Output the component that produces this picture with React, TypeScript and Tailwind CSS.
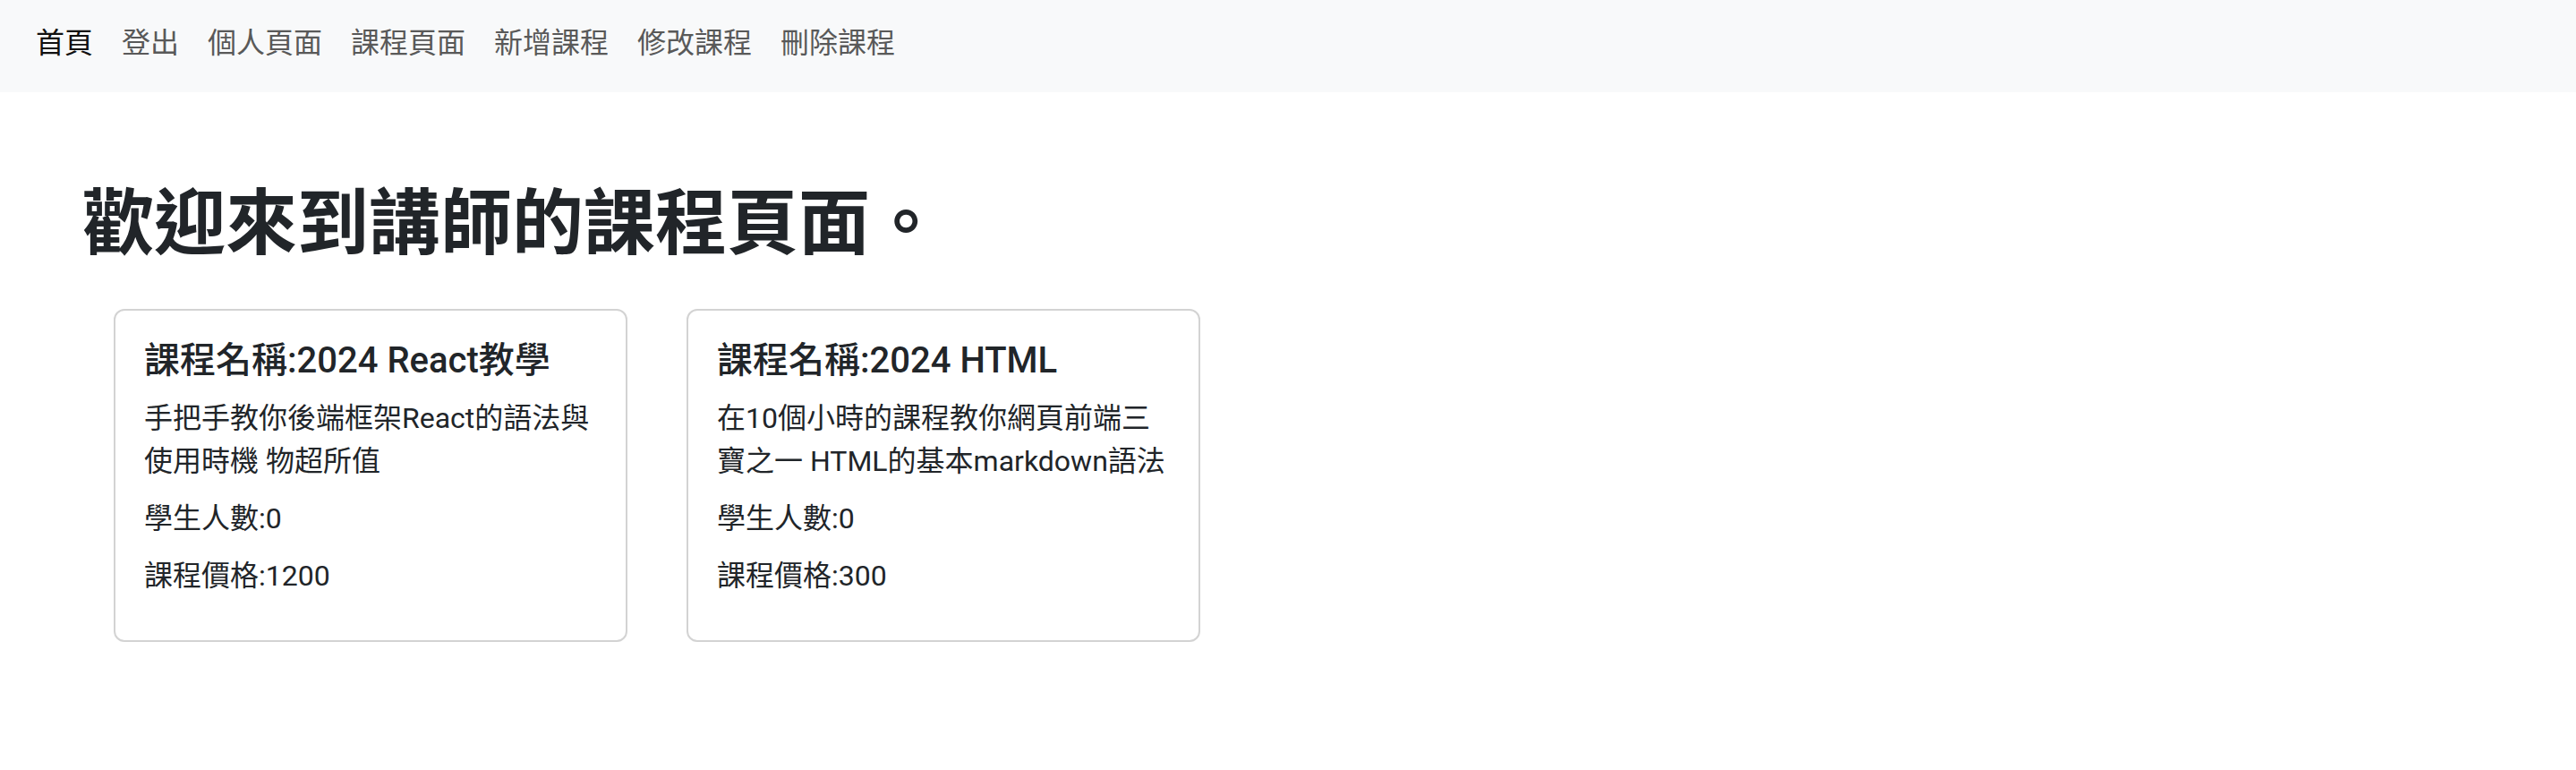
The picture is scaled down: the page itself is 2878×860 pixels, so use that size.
import React from 'react';

const navLinks = ['首頁', '登出', '個人頁面', '課程頁面', '新增課程', '修改課程', '刪除課程'];

const courses = [
  { title: '2024 React教學', description: '手把手教你後端框架React的語法與使用時機 物超所值', students: 0, price: 1200 },
  { title: '2024 HTML', description: '在10個小時的課程教你網頁前端三寶之一 HTML的基本markdown語法', students: 0, price: 300 },
];

const App: React.FC = () => {
  return (
    <div className="min-h-screen bg-white text-[#212529] font-['Roboto','Noto_Sans_CJK_TC',sans-serif]">
      <nav className="bg-[#f8f9fa] h-[103px] pt-[24px] px-[24px]">
        <ul className="flex">
          {navLinks.map((name, i) => (
            <li key={name}>
              <a
                href="#"
                className={`block px-[16px] text-[32px] leading-[48px] ${i === 0 ? 'text-[#111111]' : 'text-[#595959]'}`}
              >
                {name}
              </a>
            </li>
          ))}
        </ul>
      </nav>

      <main className="pt-[99px] pl-[92px]">
        <h1 className="text-[80px] leading-[96px] font-semibold mb-[47px]">歡迎來到講師的課程頁面。</h1>

        <div className="flex items-start gap-[66px] ml-[35px]">
          {courses.map(course => (
            <div key={course.title} className="w-[574px] border-2 border-[#d3d3d3] rounded-[12px] p-[32px]">
              <h5 className="text-[40px] leading-[48px] font-medium mb-[16px]">課程名稱:{course.title}</h5>
              <p className="text-[32px] leading-[48px] mb-[16px]">{course.description}</p>
              <p className="text-[32px] leading-[48px] mb-[16px]">學生人數:{course.students}</p>
              <p className="text-[32px] leading-[48px] mb-[16px]">課程價格:{course.price}</p>
            </div>
          ))}
        </div>
      </main>
    </div>
  );
};

export default App;
